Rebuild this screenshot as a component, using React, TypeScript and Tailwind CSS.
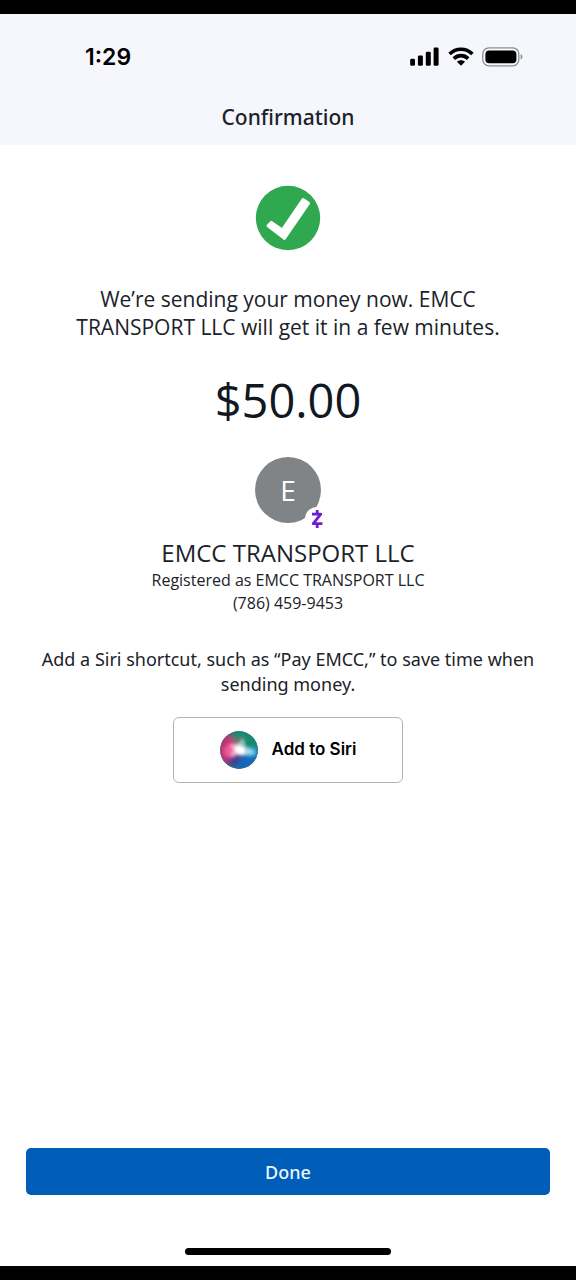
function SignalIcon() {
  return (
    <svg width="30" height="20" viewBox="0 0 30 20" aria-hidden="true">
      <rect x="0.2" y="11.8" width="4.8" height="7" rx="1.4" />
      <rect x="7.9" y="8.4" width="5" height="10.4" rx="1.4" />
      <rect x="15.8" y="4.8" width="5" height="14" rx="1.4" />
      <rect x="23.6" y="0.6" width="5" height="18.2" rx="1.4" />
    </svg>
  );
}

function WifiIcon() {
  return (
    <svg width="26" height="20" viewBox="0 0 26 20" aria-hidden="true">
      <g fill="none" stroke="currentColor" strokeWidth="3.6">
        <path d="M1.6 7C8 .6 18 .6 24.4 7" />
        <path d="M5.8 11.6c4.2-4 10.2-4 14.4 0" />
      </g>
      <path d="M13 18.8l-4-4.1c2.2-2 5.8-2 8 0z" />
    </svg>
  );
}

function BatteryIcon() {
  return (
    <svg width="42" height="20" viewBox="0 0 42 20" aria-hidden="true">
      <rect x="0.8" y="0.8" width="36" height="18" rx="6" fill="none" stroke="#8b8d92" strokeWidth="1.3" />
      <rect x="3.4" y="3.6" width="31" height="12.6" rx="3.8" />
      <path d="M38.6 7c2.4 1 2.4 4.6 0 5.6z" fill="#8b8d92" />
    </svg>
  );
}

function CheckIcon() {
  return (
    <svg width="66" height="66" viewBox="0 0 66 66" aria-hidden="true">
      <circle cx="33" cy="33" r="32.2" fill="#2fa84f" />
      <path
        d="M13 40.8l3.4-3.4 10.8 7.6L48 14.6l5.6 3.6L29.4 53.4z"
        fill="#fff"
        stroke="#fff"
        strokeWidth="3"
        strokeLinejoin="round"
      />
    </svg>
  );
}

function ZelleIcon() {
  return (
    <svg width="24" height="24" viewBox="0 0 24 24" fill="none" stroke="#6d1ed4" strokeWidth="2.8" aria-hidden="true">
      <path d="M7 7.2h8.8L8.2 16.6h9.2" strokeLinejoin="round" />
      <path d="M12.2 3v3.6M12.2 17v4" />
    </svg>
  );
}

function SiriIcon() {
  return (
    <svg width="38" height="38" viewBox="0 0 38 38" aria-hidden="true">
      <defs>
        <clipPath id="siri-orb">
          <circle cx="19" cy="19" r="18.8" />
        </clipPath>
        <filter id="siri-soft" x="-40%" y="-40%" width="180%" height="180%">
          <feGaussianBlur stdDeviation="2.2" />
        </filter>
        <filter id="siri-beam" x="-40%" y="-40%" width="180%" height="180%">
          <feGaussianBlur stdDeviation="1.6" />
        </filter>
      </defs>
      <g clipPath="url(#siri-orb)">
        <rect width="38" height="38" fill="#36506f" />
        <g filter="url(#siri-soft)">
          <path d="M10-3h30v20L20 19z" fill="#168a70" />
          <path d="M-4 3l14 0 10 16-10 14-14 3z" fill="#c72f72" />
          <path d="M42 16v26H8l11-18z" fill="#1668b8" />
          <path d="M8 5l16 1-4 9z" fill="#557a72" />
          <path d="M6 28l13-5 1 9-6 4z" fill="#3b4391" />
          <circle cx="10" cy="20" r="6" fill="#f0609c" />
          <ellipse cx="31" cy="21" rx="6" ry="4" fill="#4bbdea" />
        </g>
        <g filter="url(#siri-beam)" fill="#fff">
          <path d="M9 13l9-1 5-5 3 8 9 7-8 2-4 1-5-1-8 2 3-7z" fillOpacity=".5" />
          <ellipse cx="20" cy="19" rx="6" ry="4.4" transform="rotate(25 20 19)" />
        </g>
      </g>
      <circle cx="19" cy="19" r="18" fill="none" stroke="#247c8c" strokeOpacity=".5" />
    </svg>
  );
}

export default function App() {
  return (
    <div className="flex min-h-screen flex-col border-t-[14px] border-b-[14px] border-black bg-white font-['Open_Sans',sans-serif] text-[#1b2229]">
      <header className="bg-[#f5f7fc] pt-7 pb-3.5">
        <div className="flex h-[30px] items-center justify-between pr-[52px] pl-[85px] text-black">
          <time className="font-['Inter',sans-serif] text-[23px] leading-7 font-semibold">1:29</time>
          <div className="flex items-center gap-2">
            <SignalIcon />
            <WifiIcon />
            <BatteryIcon />
          </div>
        </div>
        <h1 className="mt-[31px] text-center font-['Noto_Sans',sans-serif] text-[21px] leading-7 font-medium">Confirmation</h1>
      </header>

      <main className="flex flex-1 flex-col items-center px-[26px] pt-10 text-center">
        <CheckIcon />
        <p className="mt-[34px] max-w-[440px] text-[21px] leading-7">
          We’re sending your money now. EMCC TRANSPORT LLC will get it in a few minutes.
        </p>
        <p className="mt-7 text-[47px] leading-[62px] text-[#11181f]">$50.00</p>

        {/* Recipient */}
        <div className="relative mt-[26px] flex size-[66px] items-center justify-center rounded-full bg-[#808487] text-[28px] text-white">
          E
          <span className="absolute -right-2 -bottom-2 rounded-full bg-white">
            <ZelleIcon />
          </span>
        </div>
        <h2 className="mt-3.5 text-2xl leading-8">EMCC TRANSPORT LLC</h2>
        <p className="text-base leading-[23px]">Registered as EMCC TRANSPORT LLC</p>
        <p className="text-base leading-[23px]">(786) 459-9453</p>

        <p className="mt-8 font-['Noto_Sans',sans-serif] text-lg leading-[25px]">
          Add a Siri shortcut, such as “Pay EMCC,” to save time when sending money.
        </p>
        <button
          type="button"
          className="mt-5 flex h-[66px] w-[230px] items-center justify-center gap-3.5 rounded-md border border-[#b5b5b5] bg-white font-['Inter',sans-serif] text-[17px] font-semibold text-black"
        >
          <SiriIcon />
          Add to Siri
        </button>
      </main>

      <footer className="px-[26px] pb-[11px]">
        <button
          type="button"
          className="block h-[47px] w-full rounded-[5px] bg-[#005eb8] font-['Noto_Sans',sans-serif] text-lg font-medium text-[#e8f6ff]"
        >
          Done
        </button>
        <div className="mx-auto mt-[53px] h-[7px] w-[206px] rounded-full bg-black" />
      </footer>
    </div>
  );
}
